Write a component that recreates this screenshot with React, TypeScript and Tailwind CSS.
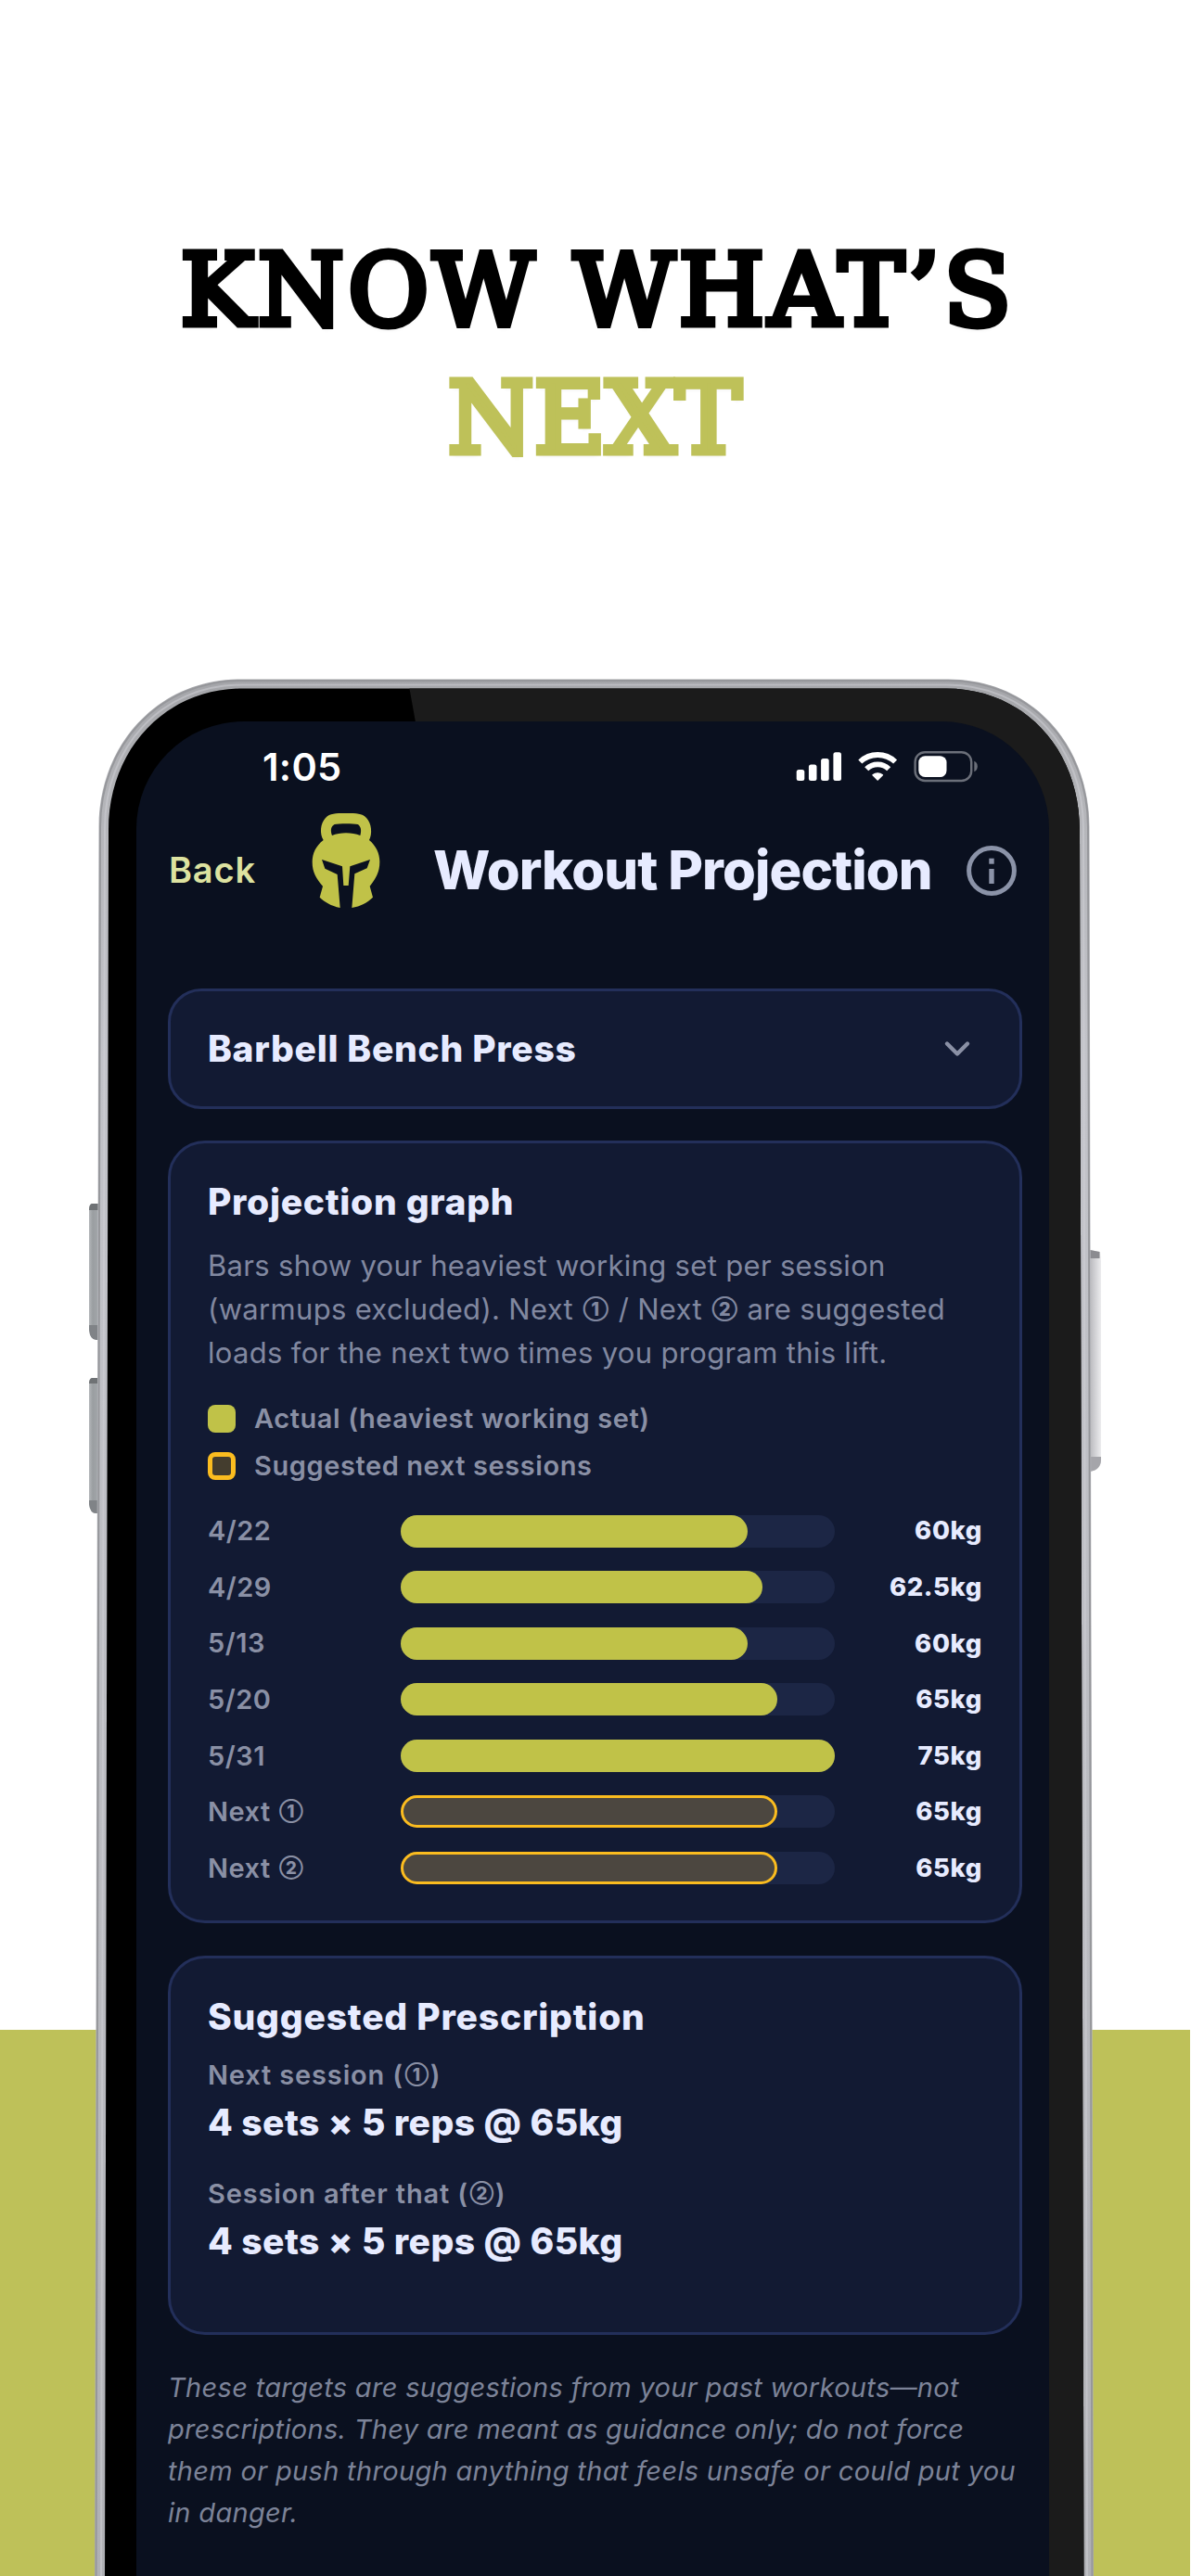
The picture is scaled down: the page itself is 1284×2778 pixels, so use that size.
import { ChevronDown } from "lucide-react"

type Session = {
  label: string
  step?: string
  value: string
  percent: number
}

const sessions: Session[] = [
  { label: "4/22", value: "60kg", percent: 80 },
  { label: "4/29", value: "62.5kg", percent: 83.3 },
  { label: "5/13", value: "60kg", percent: 80 },
  { label: "5/20", value: "65kg", percent: 86.7 },
  { label: "5/31", value: "75kg", percent: 100 },
  { label: "Next", step: "①", value: "65kg", percent: 86.7 },
  { label: "Next", step: "②", value: "65kg", percent: 86.7 },
]

function PhoneShell() {
  return (
    <svg className="absolute left-0 top-0" width="1284" height="2778" viewBox="0 0 1284 2778" fill="none">
      <defs>
        <linearGradient id="metal" x1="0" y1="732" x2="0" y2="2778" gradientUnits="userSpaceOnUse">
          <stop offset="0" stopColor="#a4a5a9" />
          <stop offset="0.06" stopColor="#b3b4b8" />
          <stop offset="0.2" stopColor="#c2c3c9" />
          <stop offset="0.7" stopColor="#b9babf" />
          <stop offset="1" stopColor="#afb0b4" />
        </linearGradient>
        <linearGradient id="leftKey" x1="96" y1="0" x2="106" y2="0" gradientUnits="userSpaceOnUse">
          <stop offset="0" stopColor="#b4b7ba" />
          <stop offset="0.4" stopColor="#9a9ea1" />
          <stop offset="1" stopColor="#a3a6aa" />
        </linearGradient>
        <linearGradient id="rightKey" x1="1175" y1="0" x2="1187" y2="0" gradientUnits="userSpaceOnUse">
          <stop offset="0" stopColor="#b9b9bd" />
          <stop offset="0.5" stopColor="#d3d3d6" />
          <stop offset="1" stopColor="#ececee" />
        </linearGradient>
        <clipPath id="bezel">
          <path d="M113 2790L117 895C117 808 178 742.500 262 742.500H1020C1104 742.500 1164 808 1164 895L1168.500 2790Z" />
        </clipPath>
      </defs>

      {/* side buttons */}
      <path d="M106 1298H99Q96 1299 96 1304V1434Q97 1445 104 1445H106Z" fill="url(#leftKey)" />
      <path d="M106 1298H99Q96 1299 96 1305H106Z" fill="#6f7275" />
      <path d="M96 1429H106V1445H104Q97 1445 96 1434Z" fill="#808387" />
      <path d="M106 1486H99Q96 1487 96 1492V1622Q97 1632 104 1632H106Z" fill="url(#leftKey)" />
      <path d="M106 1486H99Q96 1487 96 1492H106Z" fill="#6f7275" />
      <path d="M96 1618H106V1632H104Q97 1632 96 1622Z" fill="#808387" />
      <path d="M1175 1348L1186 1350L1187 1360V1574Q1187 1585 1175 1587Z" fill="url(#rightKey)" />
      <path d="M1175 1348L1185.500 1350V1357H1175Z" fill="#8b8b90" />
      <path d="M1175 1571H1187V1574Q1187 1585 1175 1587Z" fill="#a5a5aa" />

      {/* metal frame */}
      <path
        d="M102 2790L106.500 892C106.500 803 170 732.500 260 732.500H1022C1112 732.500 1174.500 803 1174.500 892L1179 2790Z"
        fill="url(#metal)"
      />
      <path
        d="M103.500 2790L108 892C108 804 171 734 260 734H1022C1111 734 1173 804 1173 892L1177.500 2790"
        stroke="#96979b"
        strokeWidth="2"
      />
      <path
        d="M109 2790L113 893C113 806 174 738.500 261 738.500H1021C1108 738.500 1168 806 1168 893L1172 2790"
        stroke="#d2d2d8"
        strokeWidth="2"
        opacity="0.5"
      />

      {/* glass bezel, lit from the right */}
      <g clipPath="url(#bezel)">
        <rect x="100" y="740" width="1090" height="2050" fill="#000000" />
        <path d="M441 740L450 790H640V2790H1190V740Z" fill="#1b1b1b" />
      </g>
    </svg>
  )
}

function StatusIcons() {
  return (
    <svg width="198" height="36" viewBox="857 808 198 36" fill="none">
      <g fill="#ffffff">
        <rect x="858.700" y="829" width="8.600" height="12" rx="2.500" />
        <rect x="871.900" y="823.500" width="8.600" height="17.500" rx="2.500" />
        <rect x="885.100" y="817" width="8.600" height="24" rx="2.500" />
        <rect x="898.400" y="810.200" width="8.600" height="30.800" rx="2.500" />
      </g>
      <g stroke="#ffffff" strokeWidth="5.800">
        <path d="M927.300 820.500A27.500 27.500 0 0 1 965.100 820.500" />
        <path d="M934.200 828.300A17 17 0 0 1 958.200 828.300" />
      </g>
      <path
        d="M941 834.800A8.500 8.500 0 0 1 951.400 834.800L946.200 840Z"
        fill="#ffffff"
        stroke="#ffffff"
        strokeWidth="1.500"
        strokeLinejoin="round"
      />
      <rect x="986.600" y="810.200" width="60.600" height="30.800" rx="10.500" stroke="#6b6f79" strokeWidth="2.400" />
      <path d="M1050.300 819.800Q1053.800 821.500 1053.800 825.500Q1053.800 829.500 1050.300 831.200Z" fill="#6b6f79" />
      <rect x="990.300" y="814.300" width="30.200" height="22.800" rx="7" fill="#ffffff" />
    </svg>
  )
}

function HelmetLogo() {
  return (
    <svg width="74" height="104" viewBox="0 0 222 312" fill="none">
      <path
        fillRule="evenodd"
        clipRule="evenodd"
        fill="#c0c248"
        d="M38 90C25 70 28 35 45 18C60 3 75 3 111 3C147 3 162 3 177 18C194 35 197 70 186 90C208 108 220 133 220 160C220 195 207 215 188 239L198 275C180 292 158 304 130 309L139 199L179 181L189 153L124 175L119 237H103L99 175L33 153L43 182L83 201L92 309C62 302 43 291 26 275L36 239C15 215 2 195 2 160C2 133 14 108 38 90ZM66 75C92 64 130 64 157 75C162 58 159 45 149 39C136 36 87 36 74 39C62 46 60 58 66 75Z"
      />
    </svg>
  )
}

function InfoIcon() {
  return (
    <svg width="56" height="56" viewBox="0 0 56 56" fill="none">
      <circle cx="28" cy="28" r="24.400" stroke="#8b93a8" strokeWidth="5" />
      <rect x="25.300" y="14.700" width="5.400" height="6" fill="#8b93a8" />
      <rect x="25.300" y="26" width="5.400" height="16" fill="#8b93a8" />
    </svg>
  )
}

// circled digit, scaled down to cap height
function Step({ children }: { children: string }) {
  return (
    <span className="mx-[1.5px] align-[0.22em] text-[0.64em] leading-none font-extrabold tracking-normal">
      {children}
    </span>
  )
}

function SessionRow({ label, step, value, percent }: Session) {
  return (
    <div className="flex h-[35px] items-center">
      <span className="w-[208px] text-[29px] font-semibold tracking-[0.5px] text-[#8a90a5]">
        {label} {step && <Step>{step}</Step>}
      </span>
      <div className="h-[35px] w-[468px] rounded-full bg-[#1c2645]">
        <div
          className={`h-full rounded-full ${step ? "border-[3px] border-[#fbbc1f] bg-[#4c4740]" : "bg-[#c0c248]"}`}
          style={{ width: `${percent}%` }}
        />
      </div>
      <span className="ml-auto text-[27.5px] font-extrabold tracking-[0.6px] text-[#e7ebff]">{value}</span>
    </div>
  )
}

export default function App() {
  return (
    <div className="relative h-[2778px] w-[1284px] overflow-hidden bg-white font-['Inter',sans-serif] whitespace-nowrap">
      <div className="absolute bottom-0 left-0 h-[589px] w-[1283px] bg-[#bec159]" />
      <PhoneShell />

      <div className="relative flex flex-col">
        <h1 className="h-[533px] pt-[245px] text-center font-['DejaVu_Serif',serif] text-[106px] leading-[138px] font-normal text-black [-webkit-text-stroke-width:7px] [text-shadow:0_4px_4px_rgba(0,0,0,0.06)]">
          <span className="block pl-[5px] tracking-[4.5px]">KNOW WHAT’S</span>
          <span className="block pr-[2px] tracking-[0px] text-[#bec159]">NEXT</span>
        </h1>

        <main className="mt-[245px] ml-[147px] h-[2000px] w-[984px] rounded-t-[116px] bg-[#0a101f] px-[34px]">
          {/* status bar */}
          <div className="flex h-[98px] items-center justify-between pr-[42px] pl-[102px]">
            <span className="text-[41.5px] font-semibold tracking-[0.3px] text-white">1:05</span>
            <StatusIcons />
          </div>

          {/* nav bar */}
          <header className="flex h-[190px] items-start">
            <span className="mt-[37px] w-[155px] pl-px text-[38px] leading-[50px] font-semibold tracking-[0.8px] text-[#dde2a0]">
              Back
            </span>
            <HelmetLogo />
            <h2 className="mt-[27px] ml-[57px] text-[58px] leading-[70px] font-extrabold tracking-[-0.9px] text-[#e7ebff]">
              Workout Projection
            </h2>
            <div className="mt-[35px] ml-auto">
              <InfoIcon />
            </div>
          </header>

          {/* exercise picker */}
          <div className="flex h-[130px] w-[921px] items-center justify-between rounded-[36px] border-[3px] border-[#232f5a] bg-[#121a33] pr-[45px] pl-[40px]">
            <span className="text-[39px] font-extrabold tracking-[0.7px] text-[#e7ebff]">Barbell Bench Press</span>
            <ChevronDown className="size-[44px] text-[#8a90a5]" strokeWidth={2.4} />
          </div>

          <section className="mt-[34px] h-[844px] w-[921px] rounded-[40px] border-[3px] border-[#232f5a] bg-[#121a33] px-[40px] pt-[38px]">
            <h3 className="text-[39px] leading-[50px] font-extrabold tracking-[0.7px] text-[#e7ebff]">
              Projection graph
            </h3>
            <p className="mt-[20px] text-[31px] leading-[47.200px] tracking-[0.32px] text-[#8188a0]">
              Bars show your heaviest working set per session
              <br />
              (warmups excluded). Next <Step>①</Step> / Next <Step>②</Step> are suggested
              <br />
              loads for the next two times you program this lift.
            </p>

            <div className="mt-[32.500px] flex flex-col gap-[20.400px] text-[29px] leading-[30px] font-semibold tracking-[0.58px] text-[#8a90a5]">
              <div className="flex items-center gap-[20px]">
                <span className="size-[30px] rounded-[8px] bg-[#c0c248]" />
                Actual (heaviest working set)
              </div>
              <div className="flex items-center gap-[20px]">
                <span className="size-[30px] rounded-[8px] border-[5px] border-[#fbbc1f] bg-[#443d2e]" />
                Suggested next sessions
              </div>
            </div>

            <div className="mt-[38px] flex flex-col gap-[25.600px]">
              {sessions.map((session) => (
                <SessionRow key={session.label + (session.step ?? "")} {...session} />
              ))}
            </div>
          </section>

          <section className="mt-[35px] h-[409px] w-[921px] rounded-[40px] border-[3px] border-[#232f5a] bg-[#121a33] px-[40px] pt-[38px]">
            <h3 className="text-[39px] leading-[50px] font-extrabold tracking-[0.78px] text-[#e7ebff]">
              Suggested Prescription
            </h3>
            <p className="mt-[18px] h-[40px] text-[29px] leading-[40px] font-semibold tracking-[0.85px] text-[#8a90a5]">
              Next session (<Step>①</Step>)
            </p>
            <p className="mt-[6px] text-[39px] leading-[50px] font-extrabold tracking-[0.45px] text-[#e7ebff]">
              4 sets × 5 reps @ 65kg
            </p>
            <p className="mt-[32px] h-[40px] text-[29px] leading-[40px] font-semibold tracking-[0.85px] text-[#8a90a5]">
              Session after that (<Step>②</Step>)
            </p>
            <p className="mt-[6px] text-[39px] leading-[50px] font-extrabold tracking-[0.45px] text-[#e7ebff]">
              4 sets × 5 reps @ 65kg
            </p>
          </section>

          <p className="mt-[34px] text-[29px] leading-[45px] tracking-[0.32px] text-[#7c8398] italic">
            These targets are suggestions from your past workouts—not
            <br />
            prescriptions. They are meant as guidance only; do not force
            <br />
            them or push through anything that feels unsafe or could put you
            <br />
            in danger.
          </p>
        </main>
      </div>
    </div>
  )
}
